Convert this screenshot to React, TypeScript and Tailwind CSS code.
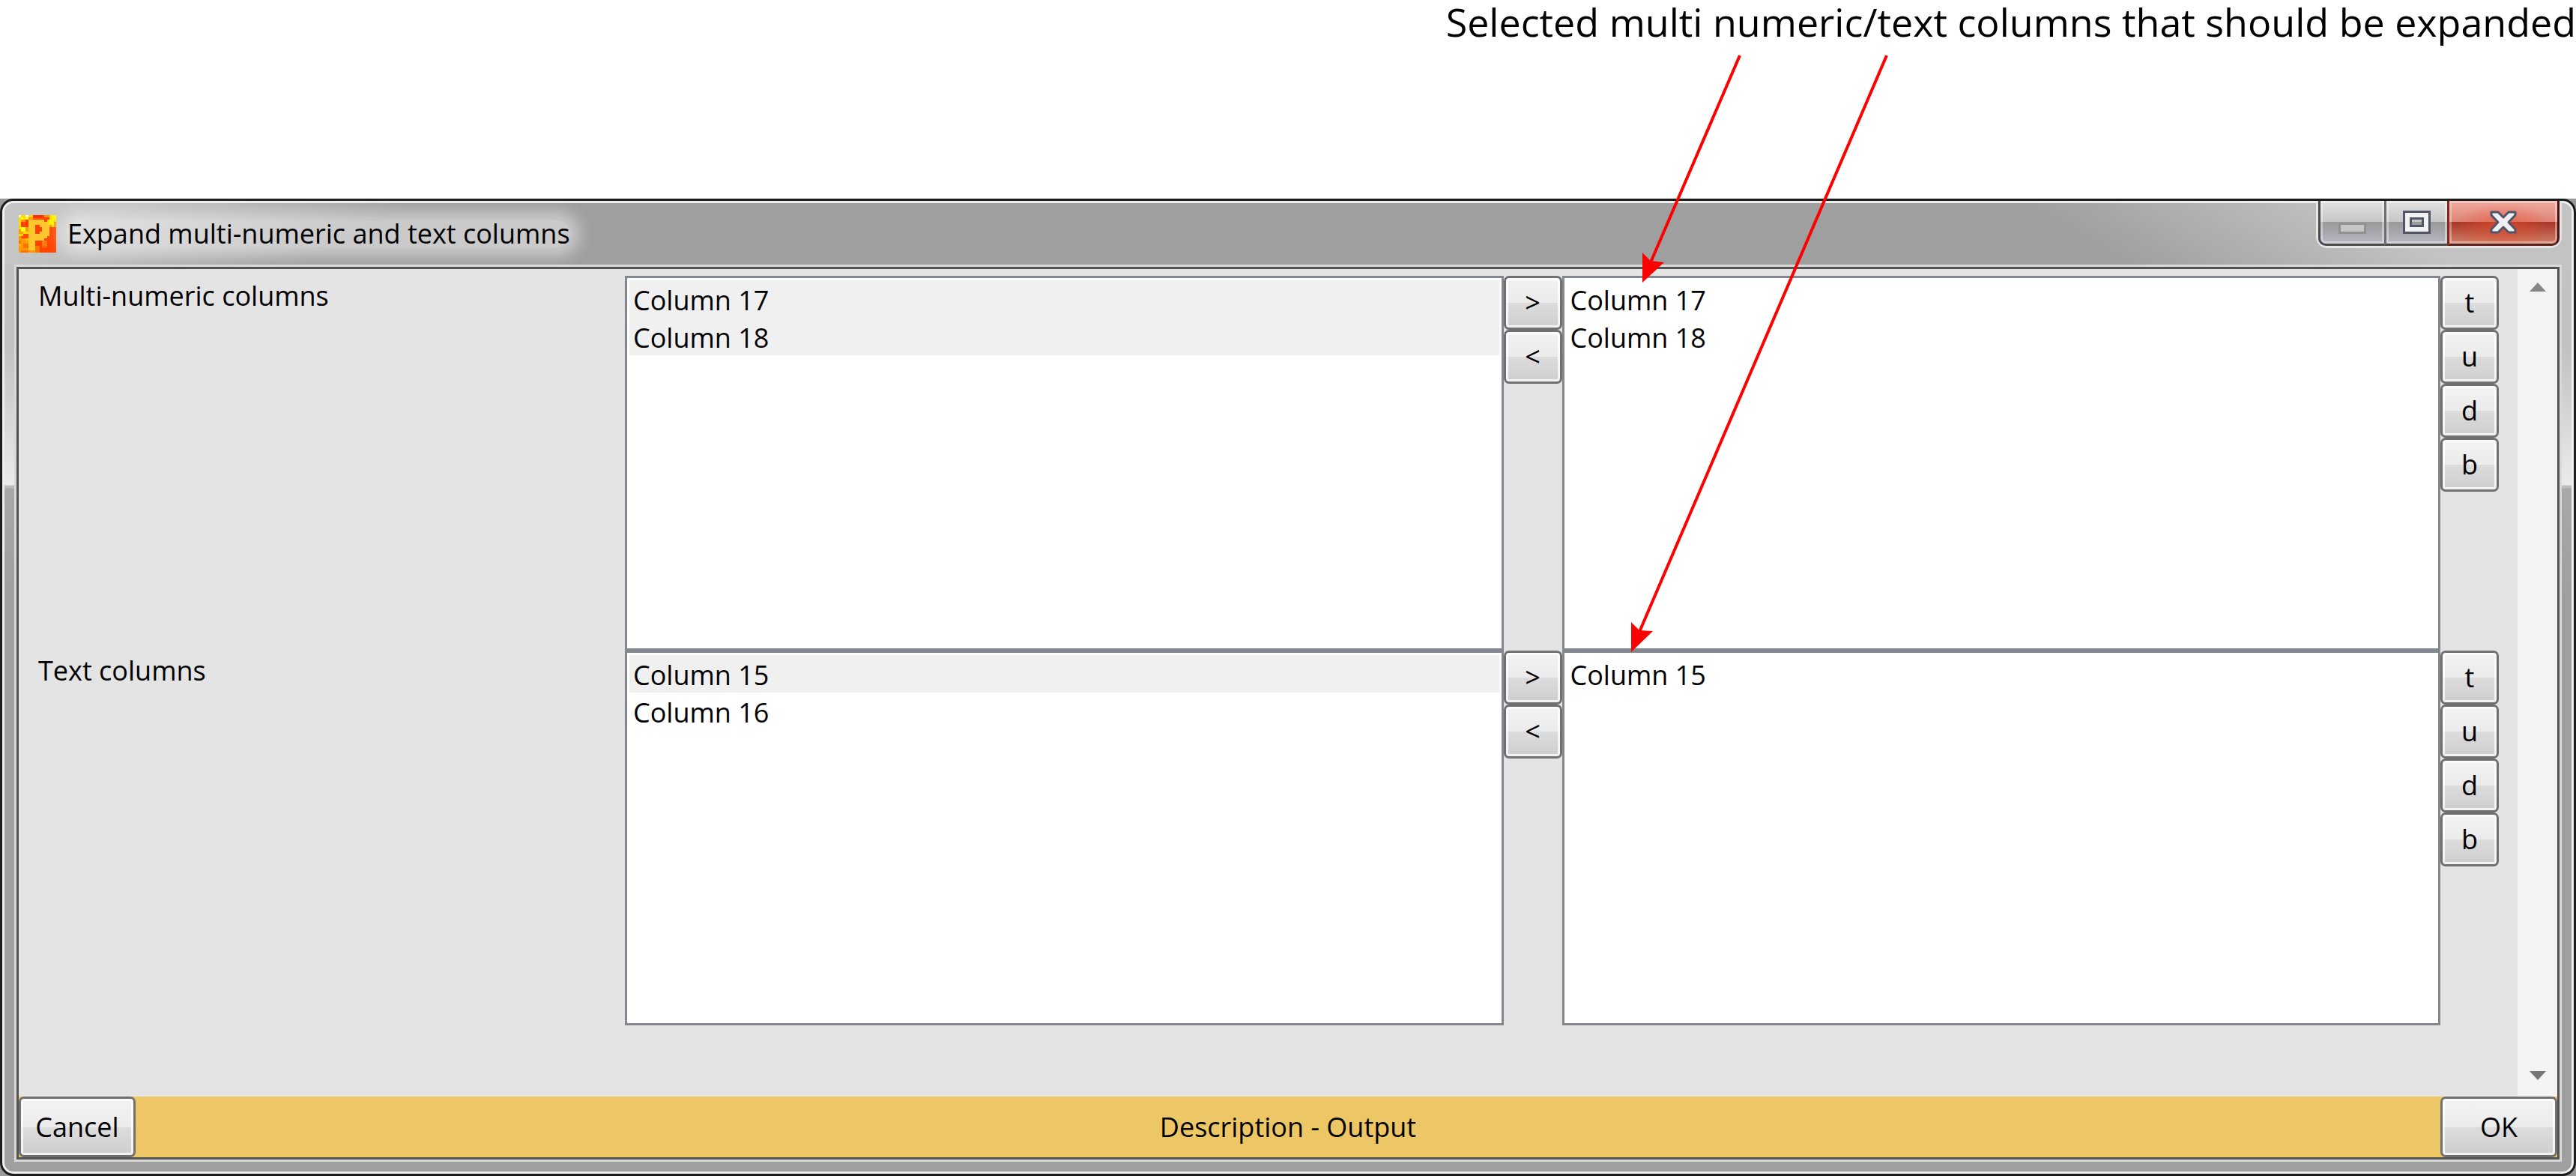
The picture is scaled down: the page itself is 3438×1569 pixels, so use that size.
import { useState } from "react";

type ListProps = { label: string; items: string[]; marked: string[]; onToggle: (item: string) => void };

const buttonFace =
  "flex items-center justify-center rounded-[7px] border-[3px] border-[#707070] bg-[linear-gradient(to_bottom,#f3f3f3_0%,#ebebeb_50%,#dddddd_50%,#cdcdcd_100%)] shadow-[inset_0_0_0_3px_rgba(255,255,255,0.75)] text-[36px] leading-[50px] text-black";

function ListBox({ label, items, marked, onToggle }: ListProps) {
  return (
    <ul
      role="listbox"
      aria-label={label}
      aria-multiselectable="true"
      className="min-w-0 flex-1 border-[3px] border-[#828790] bg-white p-[3px]"
    >
      {items.map((item) => (
        <li
          key={item}
          role="option"
          aria-selected={marked.includes(item)}
          onClick={() => onToggle(item)}
          className={
            marked.includes(item)
              ? "h-[50px] bg-[#f0f0f0] px-[5px] text-[36px] leading-[53px]"
              : "h-[50px] px-[5px] text-[36px] leading-[53px]"
          }
        >
          {item}
        </li>
      ))}
    </ul>
  );
}

function SideButtons({ buttons }: { buttons: { text: string; label: string }[] }) {
  return (
    <div className="flex w-[78px] shrink-0 flex-col">
      {buttons.map((b) => (
        <button key={b.text} type="button" aria-label={b.label} className={`${buttonFace} h-[72px]`}>
          {b.text}
        </button>
      ))}
    </div>
  );
}

const moveButtons = [
  { text: ">", label: "Add" },
  { text: "<", label: "Remove" },
];

const orderButtons = [
  { text: "t", label: "Move to top" },
  { text: "u", label: "Move up" },
  { text: "d", label: "Move down" },
  { text: "b", label: "Move to bottom" },
];

function ColumnRow({ title, available, chosen }: { title: string; available: string[]; chosen: string[] }) {
  const [marked, setMarked] = useState<string[]>(chosen);
  const toggle = (item: string) =>
    setMarked((m) => (m.includes(item) ? m.filter((x) => x !== item) : [...m, item]));
  return (
    <section className="flex h-[500px]">
      <h2 className="w-[809px] shrink-0 pl-[26px] text-[36px] leading-[53px]">{title}</h2>
      <ListBox label={`${title}, available`} items={available} marked={marked} onToggle={toggle} />
      <SideButtons buttons={moveButtons} />
      <ListBox label={`${title}, selected`} items={chosen} marked={[]} onToggle={() => {}} />
      <SideButtons buttons={orderButtons} />
    </section>
  );
}

function AppIcon() {
  return (
    <svg className="size-[50px] shrink-0" viewBox="0 0 16 16" shapeRendering="crispEdges" aria-hidden="true">
      <rect width="16" height="16" fill="#ff4200" />
      <path d="M0 0h7v16H0z" fill="#ff9a00" />
      <path d="M0 3h4v2H0zM1 8h3v2H1zM6 0h4v2H6z" fill="#ff4a00" />
      <path d="M6 0h4v1H6z" fill="#ff2a00" />
      <path d="M1 3h1v1H1zM3 2h1v3H3zM2 4h1v1H2z" fill="#ff3c00" />
      <path d="M0 0h4v2H0zM0 2h1v3H0zM0 5h3v1H0zM1 6h2v1H1zM0 8h2v1H0zM2 7h2v1H2zM4 0h2v1H4z" fill="#ffd800" />
      <path d="M1 1h1v1H1zM3 1h1v1H3zM1 5h2v2H1z" fill="#ffff10" />
      <path d="M0 0h1v1H0zM3 0h1v1H3z" fill="#fff9b0" />
      <path d="M0 11h1v2H0zM2 12h2v2H2zM1 15h3v1H1zM7 13h2v3H7z" fill="#ff7400" />
      <path d="M0 12h1v1H0zM3 10h1v1H3z" fill="#ffb400" />
      <path d="M12 2h4v3h-4zM13 0h3v2h-3z" fill="#ffdc00" />
      <path d="M14 0h2v2h-2zM13 2h2v2h-2z" fill="#fff200" />
      <path d="M11 0h2v1h-2zM13 4h1v1h-1zM15 3h1v2h-1z" fill="#ff9800" />
      <path d="M10 11h2v2h-2z" fill="#ff7a10" />
      <path d="M10 13h2v1h-2zM7 10h2v1H7z" fill="#ff6200" />
      <path d="M4 2h7v1h1v1h1v5h-1v1h-1v1H7v4H4zM7 4v4h2V7h1V5H9V4z" fill="#ffc62e" fillRule="evenodd" />
    </svg>
  );
}

function WindowButtons() {
  return (
    <div className="-mt-[3px] mr-4 flex h-[60px] w-[322px] shrink-0 self-start rounded-b-[12px] shadow-[0_0_0_3px_#e6e6e6] [clip-path:inset(0_-3px_-3px_-3px)]">
      <button
        type="button"
        aria-label="Minimize"
        className="flex w-[88px] items-center justify-center rounded-bl-[10px] border-b-[3px] border-l-[3px] border-[#4b4b4b] bg-[linear-gradient(to_bottom,#e2e2e2_0%,#c6c6c6_49%,#9a9a9a_50%,#b6b8c2_100%)] shadow-[inset_0_0_0_3px_rgba(255,255,255,0.4)]"
      >
        <svg className="mt-4 h-[15px] w-[37px]" viewBox="0 0 37 15" aria-hidden="true">
          <rect x="1.5" y="1.5" width="34" height="12" fill="#c6c6c6" stroke="#929292" strokeWidth="3" />
        </svg>
      </button>
      <button
        type="button"
        aria-label="Maximize"
        className="flex w-[84px] items-center justify-center border-b-[3px] border-l-[3px] border-b-[#4b4b4b] border-l-[#6e6e6e] bg-[linear-gradient(to_bottom,#e2e2e2_0%,#c6c6c6_49%,#9a9a9a_50%,#b6b8c2_100%)] shadow-[inset_0_0_0_3px_rgba(255,255,255,0.4)]"
      >
        <svg className="h-[31px] w-[37px]" viewBox="0 0 37 31" aria-hidden="true">
          <path
            d="M1.5 1.5h34v28h-34zM10.500 10.500h16v10h-16z"
            fill="#f2f2f4"
            fillRule="evenodd"
            stroke="#52546a"
            strokeWidth="3"
          />
        </svg>
      </button>
      <button
        type="button"
        aria-label="Close"
        className="flex w-[150px] items-center justify-center rounded-br-[10px] border-r-[3px] border-b-[3px] border-l-[3px] border-r-[#4a120c] border-b-[#5c2219] border-l-[#84281a] bg-[radial-gradient(ellipse_at_50%_60%,rgba(230,80,40,0.6)_0%,rgba(230,80,40,0)_65%),linear-gradient(to_bottom,#f2aaa0_0%,#dd8578_49%,#a8362a_50%,#cf8069_100%)] shadow-[inset_0_0_0_3px_rgba(255,255,255,0.35)]"
      >
        <svg className="h-[31px] w-[36px]" viewBox="0 0 36 31" aria-hidden="true">
          <path
            d="M2 2h9l7 7 7-7h9v4l-9 9.500 9 9.500v4h-9l-7-7-7 7H2v-4l9-9.500L2 6z"
            fill="#f0f0f0"
            stroke="#52546a"
            strokeWidth="3"
            strokeLinejoin="round"
          />
        </svg>
      </button>
    </div>
  );
}

function Arrows() {
  return (
    <svg className="pointer-events-none absolute inset-0 h-full w-full" aria-hidden="true">
      <g stroke="#ff0000" strokeWidth="4">
        <path d="M2322 74L2203 350" />
        <path d="M2518 74L2188 843" />
      </g>
      <g fill="#ff0000">
        <path d="M2192 377V337L2203 348L2221 350Z" />
        <path d="M2177 870V830L2188 841L2206 842Z" />
      </g>
    </svg>
  );
}

export default function App() {
  return (
    <main className="relative flex min-h-screen flex-col bg-white font-['Open_Sans',sans-serif] text-black">
      <p className="h-[265px] text-right text-[52px] leading-[58px] whitespace-nowrap">
        Selected multi numeric/text columns that should be expanded
      </p>

      <div className="flex flex-1 flex-col bg-[#9a9a9a]">
        <div className="flex flex-1 flex-col rounded-[18px] border-[3px] border-[#1c1c1c] bg-[#1c1c1c]">
          <div className="flex flex-1 flex-col rounded-[15px] border-[3px] border-[#efefef] bg-[linear-gradient(to_bottom,#c4c4c4_0px,#bfc1c2_190px,#ebebeb_376px,#bcbcbc_377px,#bcbcbc_380px,#a8a8a8_381px,#9f9f9f_520px)] pb-[13px]">
            <header className="flex h-[82px] items-center justify-between rounded-t-[12px] bg-[linear-gradient(150deg,#c6c6c6_70px,rgba(198,198,198,0)_270px),linear-gradient(210deg,#c3c3c3_150px,rgba(195,195,195,0)_370px),linear-gradient(#9f9f9f,#9f9f9f)]">
              <div className="flex items-center gap-[15px] pl-[19px]">
                <AppIcon />
                <h1 className="rounded-[16px] bg-white/45 text-[36px] leading-[36px] whitespace-nowrap shadow-[0_0_20px_12px_rgba(255,255,255,0.45)]">
                  Expand multi-numeric and text columns
                </h1>
              </div>
              <WindowButtons />
            </header>

            <div className="mx-[13px] flex flex-1 flex-col border-[3px] border-[#d9d9d9]">
              <div className="flex flex-1 flex-col border-[3px] border-[#525252] bg-[#e4e4e4]">
                <div className="flex flex-1">
                  <div className="min-w-0 flex-1 pt-[9px] pr-[25px]">
                    <ColumnRow
                      title="Multi-numeric columns"
                      available={["Column 17", "Column 18"]}
                      chosen={["Column 17", "Column 18"]}
                    />
                    <ColumnRow title="Text columns" available={["Column 15", "Column 16"]} chosen={["Column 15"]} />
                  </div>
                  <div className="flex w-[53px] shrink-0 flex-col items-center justify-between bg-[#f3f3f3] pt-[18px] pb-[22px]">
                    <button type="button" aria-label="Scroll up">
                      <svg className="block h-3 w-[22px]" viewBox="0 0 22 12" aria-hidden="true">
                        <path d="M11 0L22 12H0z" fill="#868686" />
                      </svg>
                    </button>
                    <button type="button" aria-label="Scroll down">
                      <svg className="block h-3 w-[22px]" viewBox="0 0 22 12" aria-hidden="true">
                        <path d="M0 0H22L11 12z" fill="#767676" />
                      </svg>
                    </button>
                  </div>
                </div>

                <footer className="flex h-[81px] items-stretch justify-between bg-[#edc766]">
                  <button type="button" className={`${buttonFace} w-[156px]`}>
                    Cancel
                  </button>
                  <p className="self-center text-[36px] leading-[50px]">Description - Output</p>
                  <button type="button" className={`${buttonFace} w-[156px]`}>
                    OK
                  </button>
                </footer>
              </div>
            </div>
          </div>
        </div>
      </div>

      <Arrows />
    </main>
  );
}
